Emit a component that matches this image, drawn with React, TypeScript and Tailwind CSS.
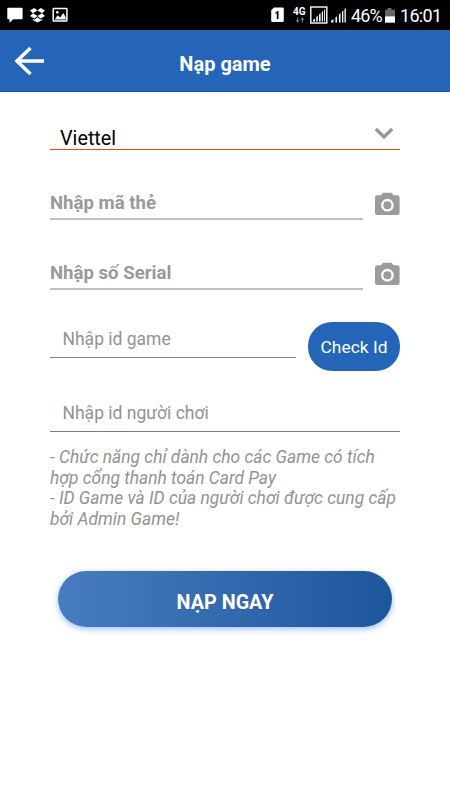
import React from "react";

function StatusBar() {
  return (
    <div className="flex h-[30px] items-center bg-black text-white">
      <svg className="ml-[7px] h-[30px] w-[17px] shrink-0" viewBox="7 0 17 30" fill="#fff">
        <path d="M8.2 7.7h13.4q1 0 1 1v9.5q0 1-1 1h-8.400L9.500 22.800v-3.600H8.200q-.9 0-.9-1V8.700q0-1 .9-1z" />
      </svg>
      <svg className="ml-[5px] h-[30px] w-[18px] shrink-0" viewBox="29 0 18 30" fill="#fff">
        <path d="M34.300 8l3.200 2.500-4.500 2.700-3-2.700zM40.700 8l4.300 2.500-3 2.700-4.500-2.700zM33 13.200l4.500 2.800-3.200 2.600-4.300-2.700zM42 13.200l3 2.700-4.300 2.700-3.200-2.600zM37.500 17.200l3.200 2.500 1.600-1v1.200l-4.800 2.700-4.700-2.700v-1.200l1.500 1z" />
      </svg>
      <svg className="ml-[4px] h-[30px] w-[18px] shrink-0" viewBox="51 0 18 30" fill="none">
        <rect x="53.200" y="8.500" width="13.700" height="12.600" stroke="#fff" strokeWidth="1.500" rx=".5" />
        <path d="M54.700 19.500l3-4.300 2.400 2.200 3.300-4.300 2.300 4.200v2.200z" fill="#fff" />
        <circle cx="57.300" cy="12.300" r="1.300" fill="#fff" />
      </svg>
      <svg className="ml-[200px] h-[30px] w-[18px] shrink-0" viewBox="269 0 18 30">
        <path d="M274 7.500h8.500q1.300 0 1.300 1.300v12q0 1.300-1.300 1.300h-10q-1.300 0-1.300-1.300V10.300z" fill="#fff" />
        <path d="M275.300 12.700l2.400-1.700h.8v8h-1.700v-5.900l-1.500.8z" fill="#000" />
      </svg>
      <div className="ml-[6px] flex h-[30px] w-[14px] shrink-0 flex-col pt-[7px]">
        <span className="h-[10px] font-[Roboto,sans-serif] text-[10px] leading-[10px] font-bold">4G</span>
        <svg className="ml-[1px] h-[6px] w-[12px]" viewBox="0 0 12 6" fill="#777">
          <path d="M3 .5h1.200v2.700h1.500L3.600 5.700 1.500 3.200H3zM7.800 5.500H9V2.800h1.500L8.400.300 6.300 2.800h1.500z" />
        </svg>
      </div>
      <svg className="ml-[2px] h-[30px] w-[38px] shrink-0" viewBox="309 0 38 30" fill="#fff">
        <rect x="310.800" y="7" width="16" height="16" fill="none" stroke="#fff" strokeWidth="1.400" />
        <path d="M313 20l2-1.500V21.500h-2zM316.200 17l1.600-1.300v5.800h-1.600zM319 14.500l1.600-1.300v8.300H319zM321.800 12l1.200-1v10.500h-1.200zM324.100 10l.9-.8v12.300h-.9z" />
        <path d="M331 21l2.400-2v3.500H331zM335.400 17.500l1.600-1.300v6.300h-1.600zM338.900 14.500l1.600-1.400v9.400h-1.600zM342 11.500l1.300-1v12H342zM344.500 9l1.300-1v14.500h-1.300z" />
      </svg>
      <span className="ml-[4px] w-[32px] font-[Roboto,sans-serif] text-[18px] tracking-[-0.900px]">46%</span>
      <svg className="ml-[1px] h-[30px] w-[12px] shrink-0" viewBox="384 0 12 30">
        <path d="M387.500 8h4v1.700h3.500v6.800h-10V9.700h2.500z" fill="#666" />
        <rect x="385" y="16.300" width="10" height="6.400" fill="#fff" />
      </svg>
      <span className="ml-[4px] font-[Roboto,sans-serif] text-[18px] tracking-[-0.700px]">16:01</span>
    </div>
  );
}

function CameraIcon() {
  return (
    <svg className="h-[24px] w-[26px] shrink-0" viewBox="0 0 26 24">
      <path d="M9.200.800h8.200l2.300 2.400h3.600q2.300 0 2.300 2.300v15.200q0 2.300-2.300 2.300H3.300Q1 23 1 20.700V5.500q0-2.300 2.300-2.300h3.600z" fill="#9b9b9b" />
      <circle cx="13.400" cy="13.200" r="5.200" fill="#9b9b9b" stroke="#fff" strokeWidth="2.300" />
    </svg>
  );
}

function CardField({ label }: { label: string }) {
  return (
    <div className="flex h-[30px] items-start justify-between">
      <div className="h-[30px] w-[313px] border-b-2 border-[#c0c0c0] text-[18.600px] leading-[27px] font-bold text-[#999]">{label}</div>
      <div className="pt-[2px]"><CameraIcon /></div>
    </div>
  );
}

export default function App() {
  return (
    <div className="flex h-[800px] w-[450px] flex-col overflow-hidden bg-white font-[Roboto,sans-serif]">
      <StatusBar />
      <header className="flex h-[62px] items-center border-b border-[#0c51ad] bg-[#2565b8] text-white">
        <svg className="ml-[14px] h-[30px] w-[32px] shrink-0" viewBox="0 0 32 30" fill="none" stroke="#fff" strokeWidth="3.500">
          <path d="M30 15H4M16.500 2L3 15l13.500 13" />
        </svg>
        <h1 className="mr-[46px] flex-1 pt-[6px] text-center text-[20px] leading-6 font-bold">Nạp game</h1>
      </header>
      <main className="px-[50px] pt-[26px]">
        <div className="flex h-[32px] justify-between border-b border-b-[#e8480c] pl-[10px] text-[19.800px] text-black">
          <span className="pt-[9px] leading-6">Viettel</span>
          <svg className="mt-[9px] mr-[6px] h-[13px] w-[20px]" viewBox="0 0 20 13" fill="none" stroke="#999" strokeWidth="3.500">
            <path d="M1.800 2L10 9.800 18.200 2" />
          </svg>
        </div>
        <div className="mt-[40px]"><CardField label="Nhập mã thẻ" /></div>
        <div className="mt-[40px]"><CardField label="Nhập số Serial" /></div>
        <div className="mt-[32px] flex justify-between">
          <div className="h-[36px] w-[246px] border-b border-[#858585] pl-[12.500px] text-[17.500px] leading-[34px] text-[#929292]">Nhập id game</div>
          <button className="h-[49px] w-[92px] rounded-[24px] bg-[#2565b8] pt-[2px] text-[17.400px] text-white">Check Id</button>
        </div>
        <div className="mt-[25px] h-[36px] border-b border-[#7b7b7b] pl-[12.500px] text-[17.500px] leading-[34px] text-[#929292]">Nhập id người chơi</div>
        <p className="mt-[15px] text-[17.400px] leading-[20.500px] whitespace-nowrap text-[#929292] italic">
          - Chức năng chỉ dành cho các Game có tích<br />hợp cổng thanh toán Card Pay<br />- ID Game và ID của người chơi được cung cấp<br />bởi Admin Game!
        </p>
        <button className="mt-[42px] ml-[8px] h-[56px] w-[334px] rounded-[28px] bg-linear-to-r from-[#477cc0] to-[#1e569b] pt-[7px] text-[19.800px] font-bold text-white shadow-[0_2px_6px_rgba(43,105,240,0.45)]">NẠP NGAY</button>
      </main>
    </div>
  );
}
